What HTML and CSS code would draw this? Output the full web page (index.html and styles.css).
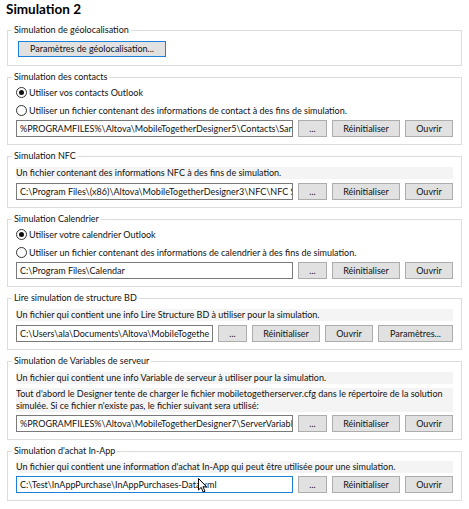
FILE: index.html
```html
<!DOCTYPE html>
<html lang="fr">
<head>
<meta charset="utf-8">
<title>Simulation 2</title>
<link rel="stylesheet" href="styles.css">
</head>
<body>
<div class="page">
  <h1 class="title">Simulation 2</h1>

  <fieldset class="group">
    <legend>Simulation de géolocalisation</legend>
    <div class="geo-row"><button class="btn btn-geo">Paramètres de géolocalisation...</button></div>
  </fieldset>

  <fieldset class="group">
    <legend>Simulation des contacts</legend>
    <div class="radio-row"><span class="radio checked"></span><span>Utiliser vos contacts Outlook</span></div>
    <div class="radio-row"><span class="radio"></span><span>Utiliser un fichier contenant des informations de contact à des fins de simulation.</span></div>
    <div class="row row-after-radio">
      <div class="field">%PROGRAMFILES%\Altova\MobileTogetherDesigner5\Contacts\San</div>
      <button class="btn b-dots">...</button>
      <button class="btn b-reset">Réinitialiser</button>
      <button class="btn b-open">Ouvrir</button>
    </div>
  </fieldset>

  <fieldset class="group">
    <legend>Simulation NFC</legend>
    <div class="desc">Un fichier contenant des informations NFC à des fins de simulation.</div>
    <div class="row">
      <div class="field">C:\Program Files\(x86)\Altova\MobileTogetherDesigner3\NFC\NFC S</div>
      <button class="btn b-dots">...</button>
      <button class="btn b-reset">Réinitialiser</button>
      <button class="btn b-open">Ouvrir</button>
    </div>
  </fieldset>

  <fieldset class="group">
    <legend>Simulation Calendrier</legend>
    <div class="radio-row"><span class="radio checked"></span><span>Utiliser votre calendrier Outlook</span></div>
    <div class="radio-row"><span class="radio"></span><span>Utiliser un fichier contenant des informations de calendrier à des fins de simulation.</span></div>
    <div class="row row-after-radio">
      <div class="field">C:\Program Files\Calendar</div>
      <button class="btn b-dots">...</button>
      <button class="btn b-reset">Réinitialiser</button>
      <button class="btn b-open">Ouvrir</button>
    </div>
  </fieldset>

  <fieldset class="group">
    <legend>Lire simulation de structure BD</legend>
    <div class="desc">Un fichier qui contient une info Lire Structure BD à utiliser pour la simulation.</div>
    <div class="row">
      <div class="field">C:\Users\ala\Documents\Altova\MobileTogethe</div>
      <button class="btn b-dots">...</button>
      <button class="btn b-reset">Réinitialiser</button>
      <button class="btn b-open">Ouvrir</button>
      <button class="btn b-params">Paramètres...</button>
    </div>
  </fieldset>

  <fieldset class="group">
    <legend>Simulation de Variables de serveur</legend>
    <div class="desc">Un fichier qui contient une info Variable de serveur à utiliser pour la simulation.</div>
    <div class="desc desc-multi">Tout d'abord le Designer tente de charger le fichier mobiletogetherserver.cfg dans le répertoire de la solution<br>simulée. Si ce fichier n'existe pas, le fichier suivant sera utilisé:</div>
    <div class="row row-tight">
      <div class="field">%PROGRAMFILES%\Altova\MobileTogetherDesigner7\ServerVariable</div>
      <button class="btn b-dots">...</button>
      <button class="btn b-reset">Réinitialiser</button>
      <button class="btn b-open">Ouvrir</button>
    </div>
  </fieldset>

  <fieldset class="group">
    <legend>Simulation d'achat In-App</legend>
    <div class="desc desc-tight">Un fichier qui contient une information d'achat In-App qui peut être utilisée pour une simulation.</div>
    <div class="row row-tight">
      <div class="field field-focus">C:\Test\InAppPurchase\InAppPurchases-Data.xml
        <svg class="cursor" width="10" height="15" viewBox="0 0 10 15" aria-hidden="true"><path d="M0.5 0.5 L0.5 12 L3.2 9.4 L5.2 14 L7 13.2 L5 8.8 L8.6 8.8 Z" fill="#fff" stroke="#000" stroke-width="1" stroke-linejoin="round"/></svg>
      </div>
      <button class="btn b-dots">...</button>
      <button class="btn b-reset">Réinitialiser</button>
      <button class="btn b-open">Ouvrir</button>
    </div>
  </fieldset>
</div>
</body>
</html>
```

FILE: styles.css
```css
html, body {
  margin: 0;
  padding: 0;
  background: #ffffff;
}

body {
  font-family: Lato, "Noto Sans", "DejaVu Sans", sans-serif;
  font-size: 9px;
  color: #111111;
}

.page {
  width: 455px;
  padding: 0 7px;
}

.title {
  margin: 0 0 6px -1px;
  font-size: 13.5px;
  line-height: 18px;
  font-weight: 700;
  color: #000;
}

.group {
  margin: 0 0 5px 0;
  padding: 0 8px 7px 8px;
  border: 1px solid #dcdcdc;
  min-width: 0;
}

.group legend {
  margin-left: -4px;
  padding: 0 2px;
  line-height: 12px;
  color: #111111;
}

.geo-row {
  display: flex;
  margin-top: 5px;
  padding-bottom: 1px;
}

.btn {
  box-sizing: border-box;
  height: 17px;
  margin: 0;
  padding: 0;
  font: inherit;
  color: #111111;
  background: #e1e1e1;
  border: 1px solid #adadad;
  border-radius: 0;
  text-align: center;
  line-height: 15px;
  flex: none;
}

.btn-geo {
  width: 148px;
  height: 16px;
  margin-left: 2px;
  border-color: #1e7fd8;
  line-height: 14px;
}

.b-dots { width: 29px; }
.b-reset { width: 68px; }
.b-open { width: 48px; }
.b-params { width: 75px; }

.radio-row {
  display: flex;
  align-items: center;
  gap: 2px;
  height: 18px;
  white-space: nowrap;
}

.radio {
  box-sizing: border-box;
  width: 11px;
  height: 11px;
  border: 1px solid #333;
  border-radius: 50%;
  background: #fff;
  display: flex;
  align-items: center;
  justify-content: center;
  flex: none;
}

.radio.checked::after {
  content: "";
  width: 5px;
  height: 5px;
  border-radius: 50%;
  background: #111;
}

.row {
  display: flex;
  gap: 5px;
  margin-top: 4px;
}

.row-after-radio {
  margin-top: 1px;
}

.row-tight {
  margin-top: 3px;
}

.field {
  position: relative;
  flex: 1 1 auto;
  min-width: 0;
  box-sizing: border-box;
  height: 17px;
  padding: 0 3px;
  border: 1px solid #7a7a7a;
  background: #fff;
  line-height: 15px;
  white-space: nowrap;
  overflow: hidden;
}

.field-focus {
  border-color: #1e7fd8;
  overflow: visible;
}

.cursor {
  position: absolute;
  left: 181px;
  top: 1px;
}

.desc {
  margin-top: 5px;
  background: #f4f4f4;
  line-height: 12px;
  white-space: nowrap;
}

.desc-multi {
  margin-top: 4px;
}

.desc-tight {
  margin-top: 4px;
}
```
